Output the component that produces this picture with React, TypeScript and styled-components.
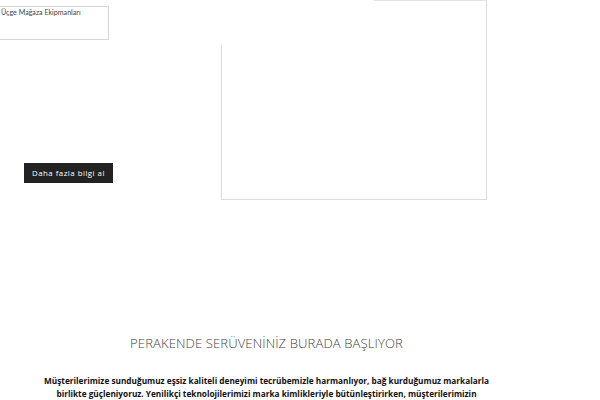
import styled, { createGlobalStyle } from 'styled-components'

const GlobalStyle = createGlobalStyle`
  html, body {
    margin: 0;
    padding: 0;
    background: #fff;
    overflow: hidden;
  }
  body {
    font-family: 'Open Sans', 'Liberation Sans', sans-serif;
    color: #222;
  }
`

const Page = styled.div`
  width: 533px;
  display: flex;
  flex-direction: column;
`

const Hero = styled.div`
  display: grid;
  grid-template-columns: 221px 266px;
  height: 200px;
`

const LeftCol = styled.div`
  display: flex;
  flex-direction: column;
  align-items: flex-start;
  padding-top: 6px;
`

const CategoryBox = styled.div`
  width: 107px;
  height: 31px;
  border: 1px solid #d6d6d6;
  border-left: none;
  font-family: 'Lato', 'Open Sans', sans-serif;
  font-size: 7.1px;
  color: #444;
  padding: 1px 0 0 1px;
  box-sizing: content-box;
  line-height: 9px;
`

const MoreButton = styled.button`
  margin: 123px 0 0 24px;
  width: 89px;
  height: 20px;
  border: none;
  background: #222;
  color: #fff;
  font-family: 'Open Sans', 'Liberation Sans', sans-serif;
  font-size: 7.8px;
  letter-spacing: 0.5px;
  padding: 0;
  cursor: pointer;
`

// image card outline: right + bottom edges, partial top and left lines
const Frame = styled.div`
  position: relative;
  border-right: 1px solid #dcdcdc;
  border-bottom: 1px solid #dcdcdc;
  height: 199px;

  &::before {
    content: '';
    position: absolute;
    top: 0;
    left: 153px;
    right: 0;
    border-top: 1px solid #e4e4e4;
  }

  &::after {
    content: '';
    position: absolute;
    top: 45px;
    left: 0;
    bottom: 0;
    border-left: 1px solid #dcdcdc;
  }
`

const Intro = styled.section`
  margin-top: 134px;
  display: flex;
  flex-direction: column;
  align-items: center;
`

const Heading = styled.h2`
  margin: 0;
  font-family: 'Open Sans', 'Liberation Sans', sans-serif;
  font-weight: 300;
  font-size: 13.1px;
  color: #444;
  letter-spacing: 0.1px;
  line-height: 18px;
`

const Lead = styled.p`
  margin: 22px 0 0;
  width: 445px;
  text-align: center;
  font-family: 'Open Sans', 'Liberation Sans', sans-serif;
  font-weight: 700;
  font-size: 8.25px;
  line-height: 13px;
  color: #111;
`

export default function App() {
  return (
    <>
      <GlobalStyle />
      <Page>
        <Hero>
          <LeftCol>
            <CategoryBox>Üçge Mağaza Ekipmanları</CategoryBox>
            <MoreButton>Daha fazla bilgi al</MoreButton>
          </LeftCol>
          <Frame />
        </Hero>
        <Intro>
          <Heading>PERAKENDE SERÜVENİNİZ BURADA BAŞLIYOR</Heading>
          <Lead>
            Müşterilerimize sunduğumuz eşsiz kaliteli deneyimi tecrübemizle harmanlıyor, bağ
            kurduğumuz markalarla birlikte güçleniyoruz. Yenilikçi teknolojilerimizi marka
            kimlikleriyle bütünleştirirken, müşterilerimizin beklentilerini en üst düzeyde
            karşılıyoruz.
          </Lead>
        </Intro>
      </Page>
    </>
  )
}
